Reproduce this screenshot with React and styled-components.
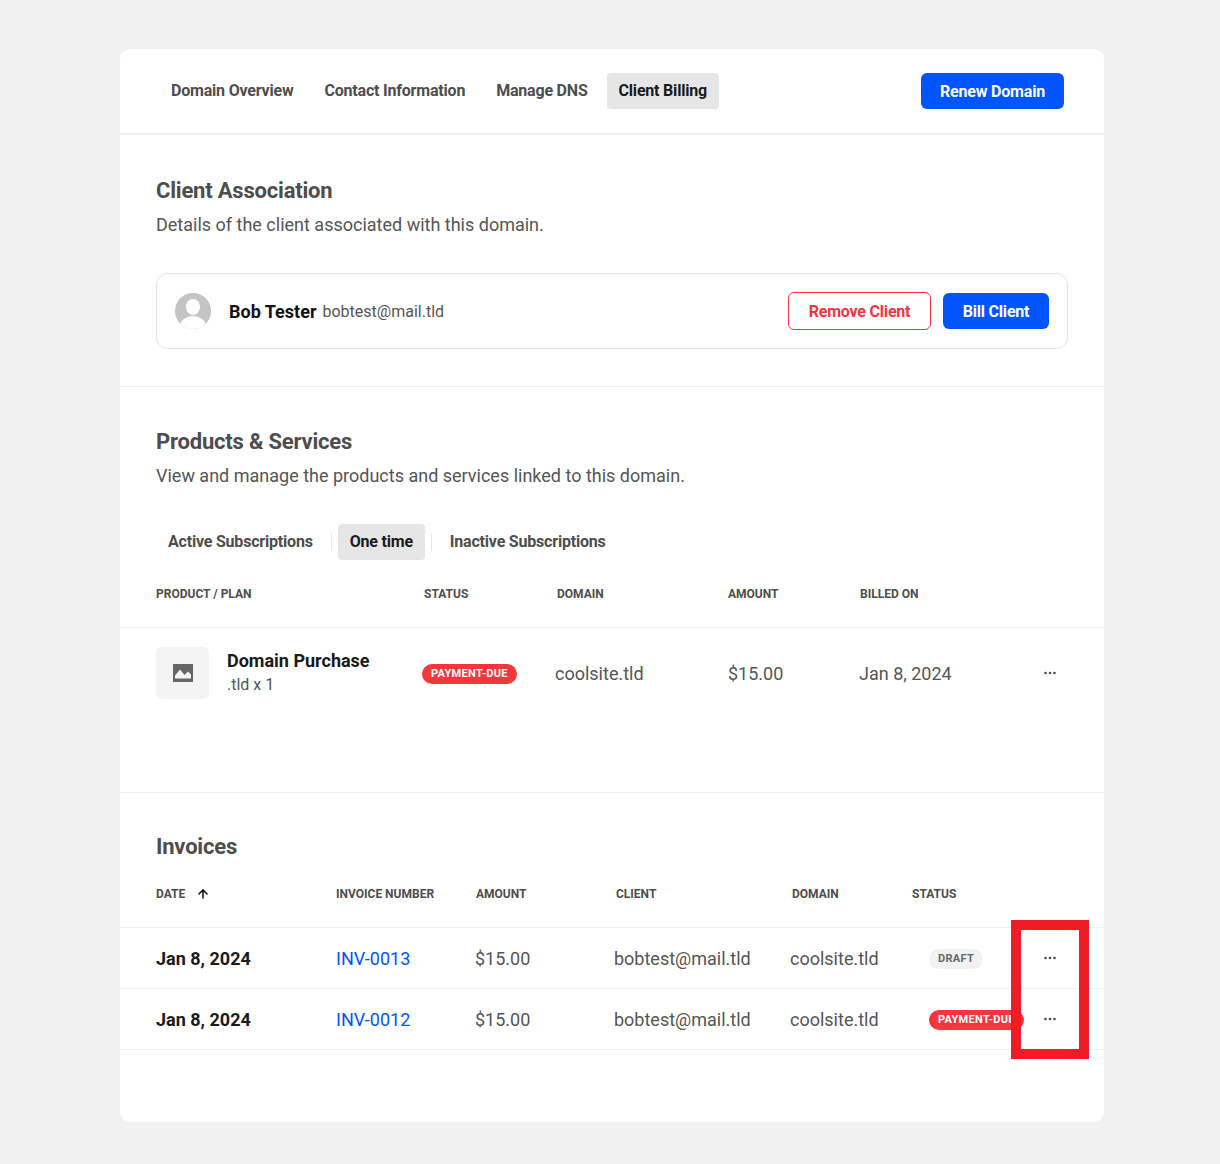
import React from 'react';
import styled, { createGlobalStyle } from 'styled-components';
import { ArrowUp } from 'lucide-react';

const GlobalStyle = createGlobalStyle`
  html, body {
    margin: 0;
    padding: 0;
    background: #f1f1f1;
    font-family: Roboto, "Liberation Sans", sans-serif;
  }
`;

const Page = styled.div`
  position: relative;
  box-sizing: border-box;
  width: 1220px;
  height: 1164px;
  padding: 49px 116px 42px 120px;
`;

const Card = styled.main`
  height: 1073px;
  background: #fff;
  border-radius: 10px;
  overflow: hidden;
`;

const TopBar = styled.nav`
  box-sizing: border-box;
  height: 86px;
  display: flex;
  align-items: flex-start;
  padding: 24px 40px 0 39px;
  border-bottom: 2px solid #f0f0f0;
`;

const TabRow = styled.div`
  display: flex;
  align-items: center;
  gap: ${(p) => p.$gap || 7}px;
  flex: 1;
`;

const Tab = styled.a`
  display: block;
  height: 36px;
  line-height: 36px;
  padding: 0 12px;
  border-radius: 4px;
  font-size: 16px;
  font-weight: 700;
  letter-spacing: -0.2px;
  white-space: nowrap;
  color: ${(p) => (p.$active ? '#1a1a1a' : '#4d4d4d')};
  background: ${(p) => (p.$active ? '#e6e6e6' : 'transparent')};
`;

const TabDivider = styled.span`
  width: 1px;
  height: 18px;
  background: #e8e8e8;
`;

const PrimaryButton = styled.button`
  box-sizing: border-box;
  height: 36px;
  width: ${(p) => p.$width}px;
  padding: 0;
  border: 0;
  border-radius: 6px;
  background: #0055ff;
  color: #fff;
  font: 700 16px Roboto, sans-serif;
  letter-spacing: -0.2px;
`;

const OutlineButton = styled.button`
  box-sizing: border-box;
  height: 38px;
  width: 143px;
  padding: 0;
  border: 1px solid #f5333f;
  border-radius: 6px;
  background: #fff;
  color: #f5333f;
  font: 700 16px Roboto, sans-serif;
  letter-spacing: -0.2px;
`;

const Section = styled.section`
  box-sizing: border-box;
  height: ${(p) => p.$height}px;
  padding-top: ${(p) => p.$top}px;
  border-bottom: ${(p) => (p.$last ? '0' : '1px solid #f0f0f0')};
`;

const Title = styled.h2`
  margin: 0 0 0 36px;
  font-size: 22px;
  line-height: 28px;
  font-weight: 700;
  letter-spacing: -0.2px;
  color: #4d4d4d;
`;

const Description = styled.p`
  margin: 8px 0 0 36px;
  font-size: 18px;
  line-height: 24px;
  color: #555;
`;

const ClientBox = styled.div`
  box-sizing: border-box;
  height: 76px;
  margin: 36px 36px 0;
  padding: 0 18px;
  display: flex;
  align-items: center;
  border: 1px solid #e4e4e4;
  border-radius: 12px;
`;

const Avatar = styled.svg`
  width: 36px;
  height: 36px;
  flex: none;
`;

const ClientName = styled.strong`
  margin-left: 18px;
  font-size: 18px;
  font-weight: 700;
  color: #111;
`;

const ClientMail = styled.span`
  margin-left: 6px;
  flex: 1;
  font-size: 16px;
  color: #555;
`;

const ClientActions = styled.div`
  display: flex;
  align-items: center;
  gap: 12px;
`;

const SubTabs = styled.div`
  display: flex;
  align-items: center;
  gap: 6px;
  margin: 36px 0 0 36px;
`;

const Row = styled.div`
  display: grid;
  grid-template-columns: ${(p) => p.$columns};
  align-items: center;
  box-sizing: border-box;
  height: ${(p) => p.$height}px;
  padding-left: 36px;
  border-bottom: ${(p) => (p.$plain ? '0' : '1px solid #f0f0f0')};
`;

const HeadCell = styled.span`
  font-size: 12px;
  font-weight: 700;
  text-transform: uppercase;
  color: #4d4d4d;
  white-space: nowrap;
  display: flex;
  align-items: center;
  gap: 11px;
`;

const Cell = styled.span`
  font-size: 18px;
  color: #555;
  white-space: nowrap;
`;

const DateCell = styled(Cell)`
  font-weight: 700;
  color: #1a1a1a;
`;

const InvoiceLink = styled.a`
  font-size: 18px;
  color: #0055ff;
`;

const Product = styled.div`
  display: flex;
  align-items: center;
  gap: 18px;
`;

const Thumb = styled.div`
  width: 53px;
  height: 52px;
  display: flex;
  align-items: center;
  justify-content: center;
  border-radius: 6px;
  background: #f4f4f4;
`;

const ProductName = styled.div`
  font-size: 18px;
  line-height: 24px;
  font-weight: 700;
  color: #1a1a1a;
`;

const ProductMeta = styled.div`
  font-size: 16px;
  line-height: 24px;
  color: #555;
`;

const Pill = styled.span`
  display: inline-block;
  height: 20px;
  line-height: 20px;
  padding: 0 9px;
  border-radius: 10px;
  font-size: 11px;
  font-weight: 700;
  letter-spacing: 0.3px;
  white-space: nowrap;
  background: ${(p) => (p.$draft ? '#f1f1f1' : '#f5363d')};
  color: ${(p) => (p.$draft ? '#666' : '#fff')};
`;

const Dots = styled.svg`
  display: block;
  width: 14px;
  height: 4px;
`;

const Highlight = styled.div`
  position: absolute;
  left: 1011px;
  top: 920px;
  box-sizing: border-box;
  width: 78px;
  height: 139px;
  border: 10px solid #ee1c25;
`;

const productHead = '268px 133px 171px 132px 1fr';
const productRow = '266px 133px 173px 131px 184px 1fr';
const invoiceHead = '180px 140px 140px 176px 120px 1fr';
const invoiceRow = '180px 139px 139px 176px 139px 114px 1fr';

const MoreDots = () => (
  <Dots viewBox="0 0 14 4">
    <circle cx="2.5" cy="2" r="1.3" fill="#4d4d4d" />
    <circle cx="7" cy="2" r="1.3" fill="#4d4d4d" />
    <circle cx="11.5" cy="2" r="1.3" fill="#4d4d4d" />
  </Dots>
);

function App() {
  return (
    <Page>
      <GlobalStyle />
      <Card>
        <TopBar>
          <TabRow>
            <Tab>Domain Overview</Tab>
            <Tab>Contact Information</Tab>
            <Tab>Manage DNS</Tab>
            <Tab $active>Client Billing</Tab>
          </TabRow>
          <PrimaryButton $width={143}>Renew Domain</PrimaryButton>
        </TopBar>

        <Section $height={252} $top={42}>
          <Title>Client Association</Title>
          <Description>Details of the client associated with this domain.</Description>
          <ClientBox>
            <Avatar viewBox="0 0 36 36">
              <clipPath id="avatar-clip">
                <circle cx="18" cy="18" r="18" />
              </clipPath>
              <g clipPath="url(#avatar-clip)">
                <rect width="36" height="36" fill="#c4c4c4" />
                <ellipse cx="18" cy="14" rx="7" ry="8" fill="#fff" />
                <ellipse cx="18" cy="33" rx="13" ry="10" fill="#fff" />
              </g>
            </Avatar>
            <ClientName>Bob Tester</ClientName>
            <ClientMail>bobtest@mail.tld</ClientMail>
            <ClientActions>
              <OutlineButton>Remove Client</OutlineButton>
              <PrimaryButton $width={106}>Bill Client</PrimaryButton>
            </ClientActions>
          </ClientBox>
        </Section>

        <Section $height={406} $top={41}>
          <Title>Products &amp; Services</Title>
          <Description>View and manage the products and services linked to this domain.</Description>
          <SubTabs>
            <Tab>Active Subscriptions</Tab>
            <TabDivider />
            <Tab $active>One time</Tab>
            <TabDivider />
            <Tab>Inactive Subscriptions</Tab>
          </SubTabs>
          <Row $columns={productHead} $height={68}>
            <HeadCell>Product / Plan</HeadCell>
            <HeadCell>Status</HeadCell>
            <HeadCell>Domain</HeadCell>
            <HeadCell>Amount</HeadCell>
            <HeadCell>Billed on</HeadCell>
          </Row>
          <Row $columns={productRow} $height={90} $plain>
            <Product>
              <Thumb>
                <svg width="20" height="18" viewBox="0 0 20 18">
                  <path
                    fill="#666"
                    fillRule="evenodd"
                    d="M0 0h20v18H0zM2 14.5h16v-4l-3-3-3.5 3.5L7 5.5l-5 6z"
                  />
                  <circle cx="14.5" cy="5" r="2" fill="#666" />
                </svg>
              </Thumb>
              <div>
                <ProductName>Domain Purchase</ProductName>
                <ProductMeta>.tld x 1</ProductMeta>
              </div>
            </Product>
            <span><Pill>PAYMENT-DUE</Pill></span>
            <Cell>coolsite.tld</Cell>
            <Cell>$15.00</Cell>
            <Cell>Jan 8, 2024</Cell>
            <MoreDots />
          </Row>
        </Section>

        <Section $height={329} $top={40} $last>
          <Title>Invoices</Title>
          <Row $columns={invoiceHead} $height={67}>
            <HeadCell>Date <ArrowUp size={14} strokeWidth={2.6} color="#111" /></HeadCell>
            <HeadCell>Invoice Number</HeadCell>
            <HeadCell>Amount</HeadCell>
            <HeadCell>Client</HeadCell>
            <HeadCell>Domain</HeadCell>
            <HeadCell>Status</HeadCell>
          </Row>
          {['INV-0013', 'INV-0012'].map((id, i) => (
            <Row key={id} $columns={invoiceRow} $height={61}>
              <DateCell>Jan 8, 2024</DateCell>
              <InvoiceLink>{id}</InvoiceLink>
              <Cell>$15.00</Cell>
              <Cell>bobtest@mail.tld</Cell>
              <Cell>coolsite.tld</Cell>
              <span>{i === 0 ? <Pill $draft>DRAFT</Pill> : <Pill>PAYMENT-DUE</Pill>}</span>
              <MoreDots />
            </Row>
          ))}
        </Section>
      </Card>
      <Highlight />
    </Page>
  );
}

export default App;
